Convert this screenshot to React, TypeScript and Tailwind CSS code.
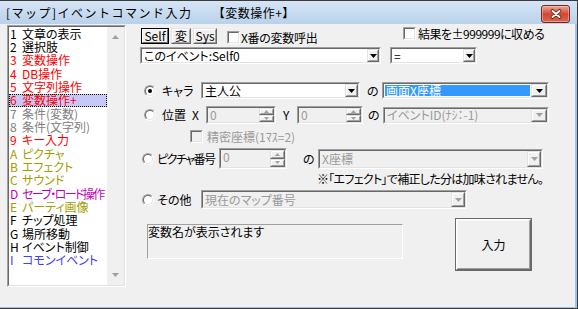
import type { ReactNode } from 'react'

const DIS = 'text-[#9a9a9a]'

type BoxProps = { className?: string; inner?: string; children?: ReactNode }

function Sunken({ className = '', inner = '', children }: BoxProps) {
  return (
    <div className={`shrink-0 border border-t-[#a0a0a0] border-l-[#a0a0a0] border-r-white border-b-white ${className}`}>
      <div className={`h-full border border-t-[#696969] border-l-[#696969] border-r-[#e3e3e3] border-b-[#e3e3e3] ${inner}`}>
        {children}
      </div>
    </div>
  )
}

function Raised({ className = '', def = false, children }: { className?: string; def?: boolean; children?: ReactNode }) {
  const outer = def
    ? 'border-black'
    : 'border-t-[#e3e3e3] border-l-[#e3e3e3] border-r-[#696969] border-b-[#696969]'
  const inner = def
    ? 'border-t-white border-l-white border-r-[#696969] border-b-[#696969]'
    : 'border-t-white border-l-white border-r-[#a0a0a0] border-b-[#a0a0a0]'
  return (
    <div className={`shrink-0 border bg-[#f0f0f0] ${outer} ${className}`}>
      <div className={`flex h-full w-full items-center justify-center border leading-none ${inner}`}>
        {children}
      </div>
    </div>
  )
}

function Arrow({ up = false, disabled = false, small = false }: { up?: boolean; disabled?: boolean; small?: boolean }) {
  const w = small ? 5 : 7
  const h = small ? 3 : 4
  return (
    <svg width={w} height={h} viewBox={`0 0 ${w} ${h}`} className="block">
      <polygon
        points={up ? `${w / 2},0 ${w},${h} 0,${h}` : `0,0 ${w},0 ${w / 2},${h}`}
        fill={disabled ? '#a0a0a0' : '#000'}
      />
    </svg>
  )
}

function Combo({
  text,
  className = '',
  disabled = false,
  selected = false,
  btn = 'w-[13px]',
}: {
  text: string
  className?: string
  disabled?: boolean
  selected?: boolean
  btn?: string
}) {
  const color = selected ? 'bg-[#3399ff] text-white' : disabled ? DIS : 'text-black'
  return (
    <Sunken className={className} inner={`flex ${disabled ? 'bg-[#f0f0f0]' : 'bg-white'}`}>
      <div className="flex min-w-0 flex-1 p-px">
        <span className={`flex flex-1 items-center whitespace-nowrap pl-px leading-none ${color}`}>{text}</span>
      </div>
      <Raised className={`${btn} h-full`}>
        <Arrow disabled={disabled} />
      </Raised>
    </Sunken>
  )
}

function Spin({ className = '' }: { className?: string }) {
  return (
    <Sunken className={className} inner="flex bg-[#f0f0f0]">
      <span className={`flex-1 pl-[2px] pt-px leading-[12px] ${DIS}`}>0</span>
      <div className="flex w-[15px] flex-col">
        <Raised className="flex-1">
          <Arrow up disabled small />
        </Raised>
        <Raised className="flex-1">
          <Arrow disabled small />
        </Raised>
      </div>
    </Sunken>
  )
}

function Check({ disabled = false, className = '' }: { disabled?: boolean; className?: string }) {
  return <Sunken className={`h-[13px] w-[13px] ${className}`} inner={disabled ? 'bg-[#f0f0f0]' : 'bg-white'} />
}

function Radio({ checked = false, className = '' }: { checked?: boolean; className?: string }) {
  return (
    <div className={`h-[12px] w-[12px] shrink-0 rounded-full border border-t-[#a0a0a0] border-l-[#a0a0a0] border-r-white border-b-white ${className}`}>
      <div className="flex h-full w-full items-center justify-center rounded-full border border-t-[#696969] border-l-[#696969] border-r-[#e3e3e3] border-b-[#e3e3e3] bg-white">
        {checked && <div className="h-[4px] w-[4px] rounded-full bg-black" />}
      </div>
    </div>
  )
}

function Lbl({ className = '', children }: { className?: string; children: ReactNode }) {
  return <span className={`shrink-0 whitespace-nowrap leading-none ${className}`}>{children}</span>
}

const items: [string, string, string][] = [
  ['1', '文章の表示', 'text-black'],
  ['2', '選択肢', 'text-black'],
  ['3', '変数操作', 'text-[#ff0000]'],
  ['4', 'DB操作', 'text-[#ff0000]'],
  ['5', '文字列操作', 'text-[#ff0000]'],
  ['6', '変数操作+', 'text-[#ff0000]'],
  ['7', '条件(変数)', 'text-[#808080]'],
  ['8', '条件(文字列)', 'text-[#808080]'],
  ['9', 'キー入力', 'text-[#ff0000]'],
  ['A', 'ピクチャ', 'text-[#a0a000]'],
  ['B', 'エフェクト', 'text-[#a0a000]'],
  ['C', 'サウンド', 'text-[#a0a000]'],
  ['D', 'セーブ・ロード操作', 'text-[#c000c0] tracking-[-1.6px]'],
  ['E', 'パーティ画像', 'text-[#a0a000]'],
  ['F', 'チップ処理', 'text-black'],
  ['G', '場所移動', 'text-black'],
  ['H', 'イベント制御', 'text-black'],
  ['I', 'コモンイベント', 'text-[#4040ff]'],
]

function EventList() {
  return (
    <Sunken className="ml-[7px] mt-[1px] h-[262px] w-[119px]" inner="flex bg-white">
      <div className="w-[98px]">
        {items.map(([k, label, color], i) => (
          <div
            key={k}
            className={`flex h-[13.33px] items-center whitespace-nowrap pl-px leading-[12px] ${color} ${
              i === 5 ? 'bg-[#c8c8f8] outline-1 -outline-offset-1 outline-dotted outline-black' : ''
            }`}
          >
            <span className="inline-block w-[12px] shrink-0 tracking-normal">{k}</span>
            {label}
          </div>
        ))}
      </div>
      <div className="flex w-[17px] flex-col items-center justify-between bg-[#f0f0f0] py-[8px]">
        <Arrow up disabled />
        <Arrow disabled />
      </div>
    </Sunken>
  )
}

function CloseBtn() {
  return (
    <div className="mr-[7px] mt-[4px] flex h-[18px] w-[29px] items-center justify-center rounded-[3px] border border-[#6e2a1e] bg-linear-to-b from-[#eba597] via-[#d2452e] to-[#d9664f] shadow-[inset_0_0_0_1px_rgba(255,255,255,0.35)]">
      <svg width="12" height="10" viewBox="0 0 12 10">
        <path d="M2.5 2 L9.5 8 M9.5 2 L2.5 8" stroke="#5a1a10" strokeWidth="3.6" strokeLinecap="round" />
        <path d="M2.5 2 L9.5 8 M9.5 2 L2.5 8" stroke="#ffffff" strokeWidth="2" strokeLinecap="round" />
      </svg>
    </div>
  )
}

function Panel() {
  return (
    <div className="ml-[12px] flex flex-1 flex-col">
      {/* Self / 変 / Sys and the two checkboxes */}
      <div className="flex h-[22px] items-start">
        <div className="ml-[3px] mt-[4px] flex h-[16px] gap-[2px]">
          <Raised def className="w-[28px]">Self</Raised>
          <Raised className="w-[20px]">変</Raised>
          <Raised className="w-[24px]">Sys</Raised>
        </div>
        <div className="ml-[10px] mt-[7px] flex h-[13px] w-[176px] items-center">
          <Check />
          <Lbl className="ml-px tracking-[-0.3px]">X番の変数呼出</Lbl>
        </div>
        <div className="mt-[3px] flex h-[13px] items-center">
          <Check />
          <Lbl className="ml-[2px] tracking-[-0.5px]">結果を±999999に収める</Lbl>
        </div>
      </div>

      {/* target variable and operator */}
      <div className="mt-px flex h-[17px]">
        <Combo className="ml-[2px] h-full w-[241px]" text="このイベント:Self0" btn="w-[12px]" />
        <Combo className="ml-[9px] h-full w-[87px]" text="=" btn="w-[12px]" />
      </div>

      {/* キャラ */}
      <div className="mt-[18px] flex h-[17px] items-center">
        <Radio checked className="ml-[6px]" />
        <Lbl className="ml-[6px] w-[39px]">キャラ</Lbl>
        <Combo className="h-full w-[159px]" text="主人公" />
        <Lbl className="ml-[7px] w-[15px]">の</Lbl>
        <Combo className="h-full w-[167px]" text="画面X座標" selected btn="w-[16px]" />
      </div>

      {/* 位置 */}
      <div className="mt-[7px] flex h-[18px] items-center">
        <Radio className="ml-[6px]" />
        <Lbl className="ml-[6px] w-[30px]">位置</Lbl>
        <Lbl className="w-[14px]">X</Lbl>
        <Spin className="h-full w-[70px]" />
        <Lbl className="ml-[7px] w-[14px]">Y</Lbl>
        <Spin className="h-full w-[66px]" />
        <Lbl className="ml-[5px] w-[15px]">の</Lbl>
        <Combo className="h-[17px] w-[166px]" text="イベントID(ﾅｼ：-1)" disabled btn="w-[16px]" />
      </div>

      <div className="mt-[6px] flex h-[13px] items-center">
        <Check disabled className="ml-[52px]" />
        <Lbl className={`ml-[4px] ${DIS}`}>精密座標(1ﾏｽ=2)</Lbl>
      </div>

      {/* ピクチャ番号 */}
      <div className="mt-[5px] flex h-[21px] items-center">
        <Radio className="ml-[4px]" />
        <Lbl className="ml-[3px] w-[62px] tracking-[-1.5px]">ピクチャ番号</Lbl>
        <Spin className="h-full w-[68px]" />
        <Lbl className="ml-[16px] w-[15px]">の</Lbl>
        <Combo className="h-[20px] w-[225px]" text="X座標" disabled btn="w-[14px]" />
      </div>

      <div className="ml-[179px] mt-[4px] h-[12px] whitespace-nowrap leading-[12px] tracking-[-0.7px]">
        ※「エフェクト」で補正した分は加味されません。
      </div>

      {/* その他 */}
      <div className="mt-[5px] flex h-[19px] items-center">
        <Radio className="ml-[4px]" />
        <Lbl className="ml-[3px] w-[44px]">その他</Lbl>
        <Combo className="h-full w-[266px]" text="現在のマップ番号" disabled btn="w-[14px]" />
      </div>

      <div className="mt-[9px] flex items-start">
        <div className="ml-[9px] mt-[6px] h-[35px] w-[256px] whitespace-nowrap border border-t-[#a0a0a0] border-l-[#a0a0a0] border-r-white border-b-white leading-[13px]">
          変数名が表示されます
        </div>
        <div className="ml-[52px] h-[53px] w-[77px] border border-[#6a6a6a]">
          <div className="h-full border border-t-white border-l-white border-r-[#6a6a6a] border-b-[#6a6a6a]">
            <div className="flex h-full items-center justify-center border border-t-[#f8f8f8] border-l-[#f8f8f8] border-r-[#a0a0a0] border-b-[#a0a0a0] leading-none">
              入力
            </div>
          </div>
        </div>
      </div>
    </div>
  )
}

export default function App() {
  return (
    <div className="h-[309px] w-[578px] overflow-hidden">
      <div className="flex h-full w-full flex-col border-t border-r border-b border-[#3c3c3c] bg-[#9fc1ea] font-['Noto_Sans_CJK_JP',sans-serif] text-[12px] text-black">
        <div className="flex h-[23px] shrink-0 items-start justify-between bg-linear-to-b from-[#d6e5f5] to-[#b9d1ea]">
          <div className="ml-[6px] mt-[5px] whitespace-nowrap leading-[14px]">
            <span className="tracking-[1.5px]">[マップ]イベントコマンド入力</span>
            <span className="ml-[20px] tracking-[0.5px]">【変数操作+】</span>
          </div>
          <CloseBtn />
        </div>
        <div className="flex h-[283px] w-[575px] shrink-0 bg-[#f0f0f0] [font-feature-settings:'palt']">
          <EventList />
          <Panel />
        </div>
      </div>
    </div>
  )
}
